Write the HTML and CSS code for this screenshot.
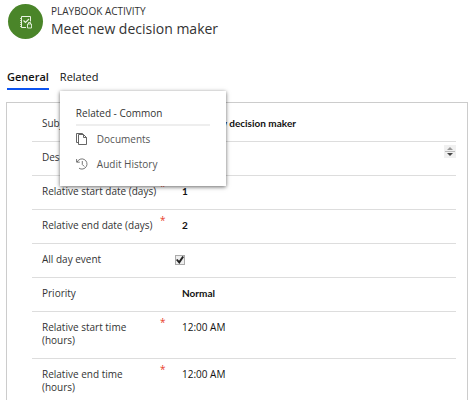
FILE: index.html
```html
<!DOCTYPE html>
<html lang="en">
<head>
<meta charset="utf-8">
<title>Meet new decision maker</title>
<link rel="stylesheet" href="styles.css">
</head>
<body>
<header class="header">
  <div class="badge">
    <svg width="14" height="14" viewBox="0 0 14 14" fill="none" stroke="currentColor" aria-hidden="true">
      <path d="M7 12.500H2.500V1.500h9v5"/>
      <path d="M1 3.500h2M1 5.500h2M1 7.500h2M1 9.500h2M1 11.500h2" stroke-width=".8"/>
      <path d="M4.500 5.500l2 2 3.500-3.500" stroke-width="1.200"/>
      <path d="M8.500 9h4v4h-4zM9.500 9V7.500h2V9" stroke-width=".9"/>
    </svg>
  </div>
  <div>
    <div class="kind">PLAYBOOK ACTIVITY</div>
    <h1 class="title">Meet new decision maker</h1>
  </div>
</header>
<nav class="tabs">
  <button class="tab tab-active" type="button">General</button>
  <div class="tab-holder">
    <button class="tab" type="button">Related</button>
    <div class="menu">
      <h2 class="menu-title">Related - Common</h2>
      <a class="menu-item" href="#documents">
        <svg width="12" height="12" viewBox="0 0 12 12" fill="none" stroke="currentColor" aria-hidden="true"><path d="M2.500 9.500H.5v-9h6v1M2.500 1.500h5l3 3v7h-8zM7.500 1.500v3h3" stroke-width=".9"/></svg>
        <span>Documents</span>
      </a>
      <a class="menu-item" href="#audit">
        <svg width="12" height="12" viewBox="0 0 12 12" fill="none" stroke="currentColor" aria-hidden="true"><path d="M1.200 4A5.100 5.100 0 1 1 3 10.200M.6 1v3.200h3.200M6.300 3v3.500l2 2" stroke-width=".8"/></svg>
        <span>Audit History</span>
      </a>
    </div>
  </div>
</nav>
<form class="panel">
  <div class="row">
    <label class="label" for="subject">Subject</label><span class="mark"></span>
    <input class="value" id="subject" value="Meet new decision maker">
  </div>
  <div class="row">
    <label class="label" for="description">Description</label><span class="mark"></span>
    <textarea class="value area" id="description" rows="1"></textarea>
    <svg class="scroller" width="12" height="13" viewBox="0 0 12 13" aria-hidden="true"><path fill="#f0f0f0" d="M0 0h12v13H0z"/><path fill="#999" d="M3 5l3-3 3 3z"/><path stroke="#bbb" d="M1 6.500h10"/><path fill="#444" d="M3 8h6l-3 3z"/></svg>
  </div>
  <div class="row">
    <label class="label" for="start-day">Relative start date (days)</label><span class="mark">*</span>
    <input class="value" id="start-day" value="1">
  </div>
  <div class="row">
    <label class="label" for="end-day">Relative end date (days)</label><span class="mark">*</span>
    <input class="value" id="end-day" value="2">
  </div>
  <div class="row">
    <label class="label" for="all-day">All day event</label><span class="mark"></span>
    <input class="check" id="all-day" type="checkbox" checked>
  </div>
  <div class="row">
    <label class="label" for="priority">Priority</label><span class="mark"></span>
    <select class="value" id="priority"><option>Normal</option></select>
  </div>
  <div class="row row-tall">
    <label class="label" for="start-time"><span>Relative start time</span> <span class="unit">(hours)</span></label><span class="mark">*</span>
    <input class="value" id="start-time" value="12:00 AM">
  </div>
  <div class="row row-tall">
    <label class="label" for="end-time"><span>Relative end time</span> <span class="unit">(hours)</span></label><span class="mark">*</span>
    <input class="value" id="end-time" value="12:00 AM">
  </div>
</form>
</body>
</html>
```
FILE: styles.css
```css
* { box-sizing: border-box; }
body {
  margin: 0;
  height: 100vh;
  overflow: hidden;
  background: #fff;
  color: #333;
  font-family: "Open Sans", "Noto Sans", sans-serif;
  font-size: 10px;
}
button, input, select, textarea { font: inherit; color: inherit; border: 0; padding: 0; margin: 0; background: none; }
.header { display: flex; gap: 8px; padding: 4px 8px 0; }
.badge {
  display: grid;
  place-items: center;
  width: 35px;
  height: 35px;
  border-radius: 50%;
  background: #4a8529;
  color: #e8f3e2;
}
.kind { font-size: 10px; line-height: 14px; }
.title { margin: 0; font-size: 14px; line-height: 22px; font-weight: 400; }
.tabs { display: flex; gap: 11px; padding: 27px 7px 0; }
.tab-holder { position: relative; }
.tab { display: block; height: 23px; font-size: 11px; line-height: 18px; padding-bottom: 3px; color: #111; }
.tab-active { font-weight: 600; border-bottom: 2px solid #0b53f0; padding-bottom: 1px; }
.menu {
  position: absolute;
  z-index: 1;
  top: 24px;
  left: 0;
  width: 166px;
  padding: 14px 16px 10px;
  background: #fff;
  box-shadow: 0 1px 4px rgba(0, 0, 0, .6);
}
.menu-title {
  margin: 0;
  padding-bottom: 3px;
  border-bottom: 2px solid #eee;
  font-size: 10px;
  line-height: 16px;
  font-weight: 500;
}
.menu-item { display: flex; align-items: center; gap: 9px; height: 25px; color: #555; font-size: 10px; text-decoration: none; }
.panel { margin: 12px 3px 0 6px; padding: 5px 11px 20px 25px; border: 1px solid #ccc; }
.row {
  display: grid;
  grid-template-columns: 118px 15px 1fr auto;
  height: 34px;
  padding: 3px 0 0 10px;
  border-bottom: 1px solid #ddd;
}
.row-tall { height: 47px; }
.label { padding-top: 6px; font-weight: 500; line-height: 13px; }
.unit { display: block; }
.mark { color: #e8402a; line-height: 14px; }
.value {
  width: 100%;
  min-width: 0;
  height: 14px;
  margin-top: 5px;
  padding-left: 7px;
  font-family: Lato, "Open Sans", sans-serif;
  line-height: 14px;
  font-weight: 700;
  color: #111;
  appearance: none;
}
.row-tall .value { font-family: "Open Sans", "Noto Sans", sans-serif; font-weight: 500; }
.area { resize: none; overflow: hidden; }
.check {
  width: 10px;
  height: 10px;
  margin-top: 8px;
  border: 1px solid #aaa;
  background: #eee;
  appearance: none;
}
.check:checked::before {
  content: "";
  display: block;
  width: 8px;
  height: 8px;
  background: #222;
  clip-path: polygon(0 50%, 18% 38%, 38% 60%, 80% 0, 100% 12%, 42% 100%);
}
```
